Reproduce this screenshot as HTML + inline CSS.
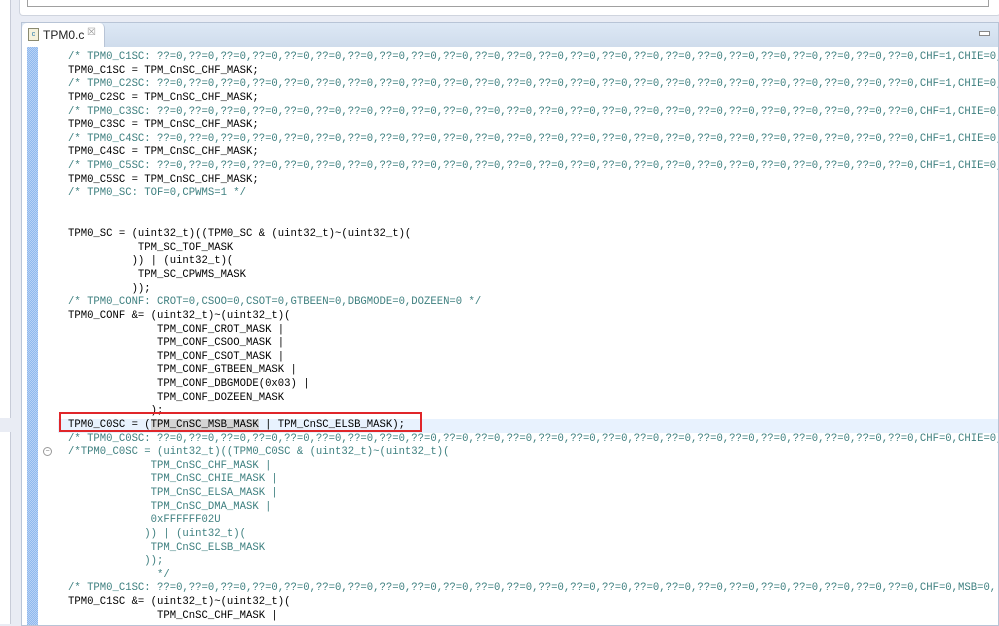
<html><head><style>
body{margin:0;width:999px;height:624px;overflow:hidden;background:#e9ecf4;position:relative;font-family:"Liberation Sans",sans-serif}
.top{position:absolute;left:19px;top:0;width:980px;height:15px;background:#fff;border:1px solid #cfd4de;border-top:none;border-radius:0 0 4px 4px}
.top .t{position:absolute;left:7px;top:0;width:960px;height:6px;border:1px solid #a0a0a0;border-top:none;background:#fff}
.lp{position:absolute;left:0;top:0;width:10px;height:418px;background:#fff;border-right:1px solid #c8ccd8}
.lp2{position:absolute;left:0;top:432px;width:10px;height:192px;background:#fff;border-right:1px solid #c8ccd8}
.ed{position:absolute;left:21px;top:22px;width:976px;height:602px;border:1px solid #b8c4d6;background:#fff;overflow:hidden}
.tb{position:absolute;left:0;top:0;width:976px;height:24px;background:linear-gradient(#dde8f5,#cfdcec)}
.tab{position:absolute;left:0;top:0;width:82px;height:24px;background:#fff;border-radius:5px 5px 0 0;border-right:1px solid #b8c4d6;font-size:12px;color:#222}
.tab span{position:absolute;left:21px;top:5px}
.tab i{position:absolute;left:6px;top:5px;width:9px;height:11px;border:1px solid #8a8a70;background:#f5f1dc;font-size:7px;color:#27a;font-style:normal;line-height:11px;text-align:center}
.tab b{position:absolute;left:65px;top:4px;font-size:10px;color:#999;font-weight:normal}
.min{position:absolute;right:8px;top:8px;width:9px;height:3px;border:1px solid #888;background:#fff}
.stripe{position:absolute;left:5px;top:24px;width:11px;height:578px;background:repeating-conic-gradient(#8fb8ee 0 25%,#b9d3f5 0 50%) 0 0/2px 2px}
.code{position:absolute;left:46px;top:28px;font-family:"Liberation Mono",monospace;font-size:10.6px;line-height:13.63px;white-space:pre;color:#000}
.c{color:#3f8080}
.hl{background:#e8f2fe;display:inline-block;width:930px;margin-left:-10px;padding-left:10px}
.sel{background:#d4d4d4}
.box{position:absolute;left:37px;top:389px;width:359px;height:16px;border:2px solid #e0262a}
.fold{position:absolute;left:21px;top:424px;width:7px;height:7px;border:1px solid #999;border-radius:50%;font-size:7px;line-height:7px;text-align:center;color:#777}
</style></head><body>
<div class="top"><div class="t"></div></div>
<div class="lp"></div><div class="lp2"></div>
<div class="ed">
<div class="tb"><div class="tab"><i>c</i><span>TPM0.c</span><b>☒</b></div><div class="min"></div></div>
<div class="stripe"></div>
<div class="fold">−</div>
<div class="code"><span class="c">/* TPM0_C1SC: ??=0,??=0,??=0,??=0,??=0,??=0,??=0,??=0,??=0,??=0,??=0,??=0,??=0,??=0,??=0,??=0,??=0,??=0,??=0,??=0,??=0,??=0,??=0,??=0,CHF=1,CHIE=0,</span>
TPM0_C1SC = TPM_CnSC_CHF_MASK;
<span class="c">/* TPM0_C2SC: ??=0,??=0,??=0,??=0,??=0,??=0,??=0,??=0,??=0,??=0,??=0,??=0,??=0,??=0,??=0,??=0,??=0,??=0,??=0,??=0,??=0,??=0,??=0,??=0,CHF=1,CHIE=0,</span>
TPM0_C2SC = TPM_CnSC_CHF_MASK;
<span class="c">/* TPM0_C3SC: ??=0,??=0,??=0,??=0,??=0,??=0,??=0,??=0,??=0,??=0,??=0,??=0,??=0,??=0,??=0,??=0,??=0,??=0,??=0,??=0,??=0,??=0,??=0,??=0,CHF=1,CHIE=0,</span>
TPM0_C3SC = TPM_CnSC_CHF_MASK;
<span class="c">/* TPM0_C4SC: ??=0,??=0,??=0,??=0,??=0,??=0,??=0,??=0,??=0,??=0,??=0,??=0,??=0,??=0,??=0,??=0,??=0,??=0,??=0,??=0,??=0,??=0,??=0,??=0,CHF=1,CHIE=0,</span>
TPM0_C4SC = TPM_CnSC_CHF_MASK;
<span class="c">/* TPM0_C5SC: ??=0,??=0,??=0,??=0,??=0,??=0,??=0,??=0,??=0,??=0,??=0,??=0,??=0,??=0,??=0,??=0,??=0,??=0,??=0,??=0,??=0,??=0,??=0,??=0,CHF=1,CHIE=0,</span>
TPM0_C5SC = TPM_CnSC_CHF_MASK;
<span class="c">/* TPM0_SC: TOF=0,CPWMS=1 */</span>


TPM0_SC = (uint32_t)((TPM0_SC &amp; (uint32_t)~(uint32_t)(
           TPM_SC_TOF_MASK
          )) | (uint32_t)(
           TPM_SC_CPWMS_MASK
          ));
<span class="c">/* TPM0_CONF: CROT=0,CSOO=0,CSOT=0,GTBEEN=0,DBGMODE=0,DOZEEN=0 */</span>
TPM0_CONF &amp;= (uint32_t)~(uint32_t)(
              TPM_CONF_CROT_MASK |
              TPM_CONF_CSOO_MASK |
              TPM_CONF_CSOT_MASK |
              TPM_CONF_GTBEEN_MASK |
              TPM_CONF_DBGMODE(0x03) |
              TPM_CONF_DOZEEN_MASK
             );
<span class="hl">TPM0_C0SC = (<span class="sel">TPM_CnSC_MSB_MASK</span> | TPM_CnSC_ELSB_MASK);</span>
<span class="c">/* TPM0_C0SC: ??=0,??=0,??=0,??=0,??=0,??=0,??=0,??=0,??=0,??=0,??=0,??=0,??=0,??=0,??=0,??=0,??=0,??=0,??=0,??=0,??=0,??=0,??=0,??=0,CHF=0,CHIE=0,</span>
<span class="c">/*TPM0_C0SC = (uint32_t)((TPM0_C0SC &amp; (uint32_t)~(uint32_t)(
             TPM_CnSC_CHF_MASK |
             TPM_CnSC_CHIE_MASK |
             TPM_CnSC_ELSA_MASK |
             TPM_CnSC_DMA_MASK |
             0xFFFFFF02U
            )) | (uint32_t)(
             TPM_CnSC_ELSB_MASK
            ));
              */</span>
<span class="c">/* TPM0_C1SC: ??=0,??=0,??=0,??=0,??=0,??=0,??=0,??=0,??=0,??=0,??=0,??=0,??=0,??=0,??=0,??=0,??=0,??=0,??=0,??=0,??=0,??=0,??=0,??=0,CHF=0,MSB=0,</span>
TPM0_C1SC &amp;= (uint32_t)~(uint32_t)(
              TPM_CnSC_CHF_MASK |</div>
<div class="box"></div>
</div>
</body></html>
